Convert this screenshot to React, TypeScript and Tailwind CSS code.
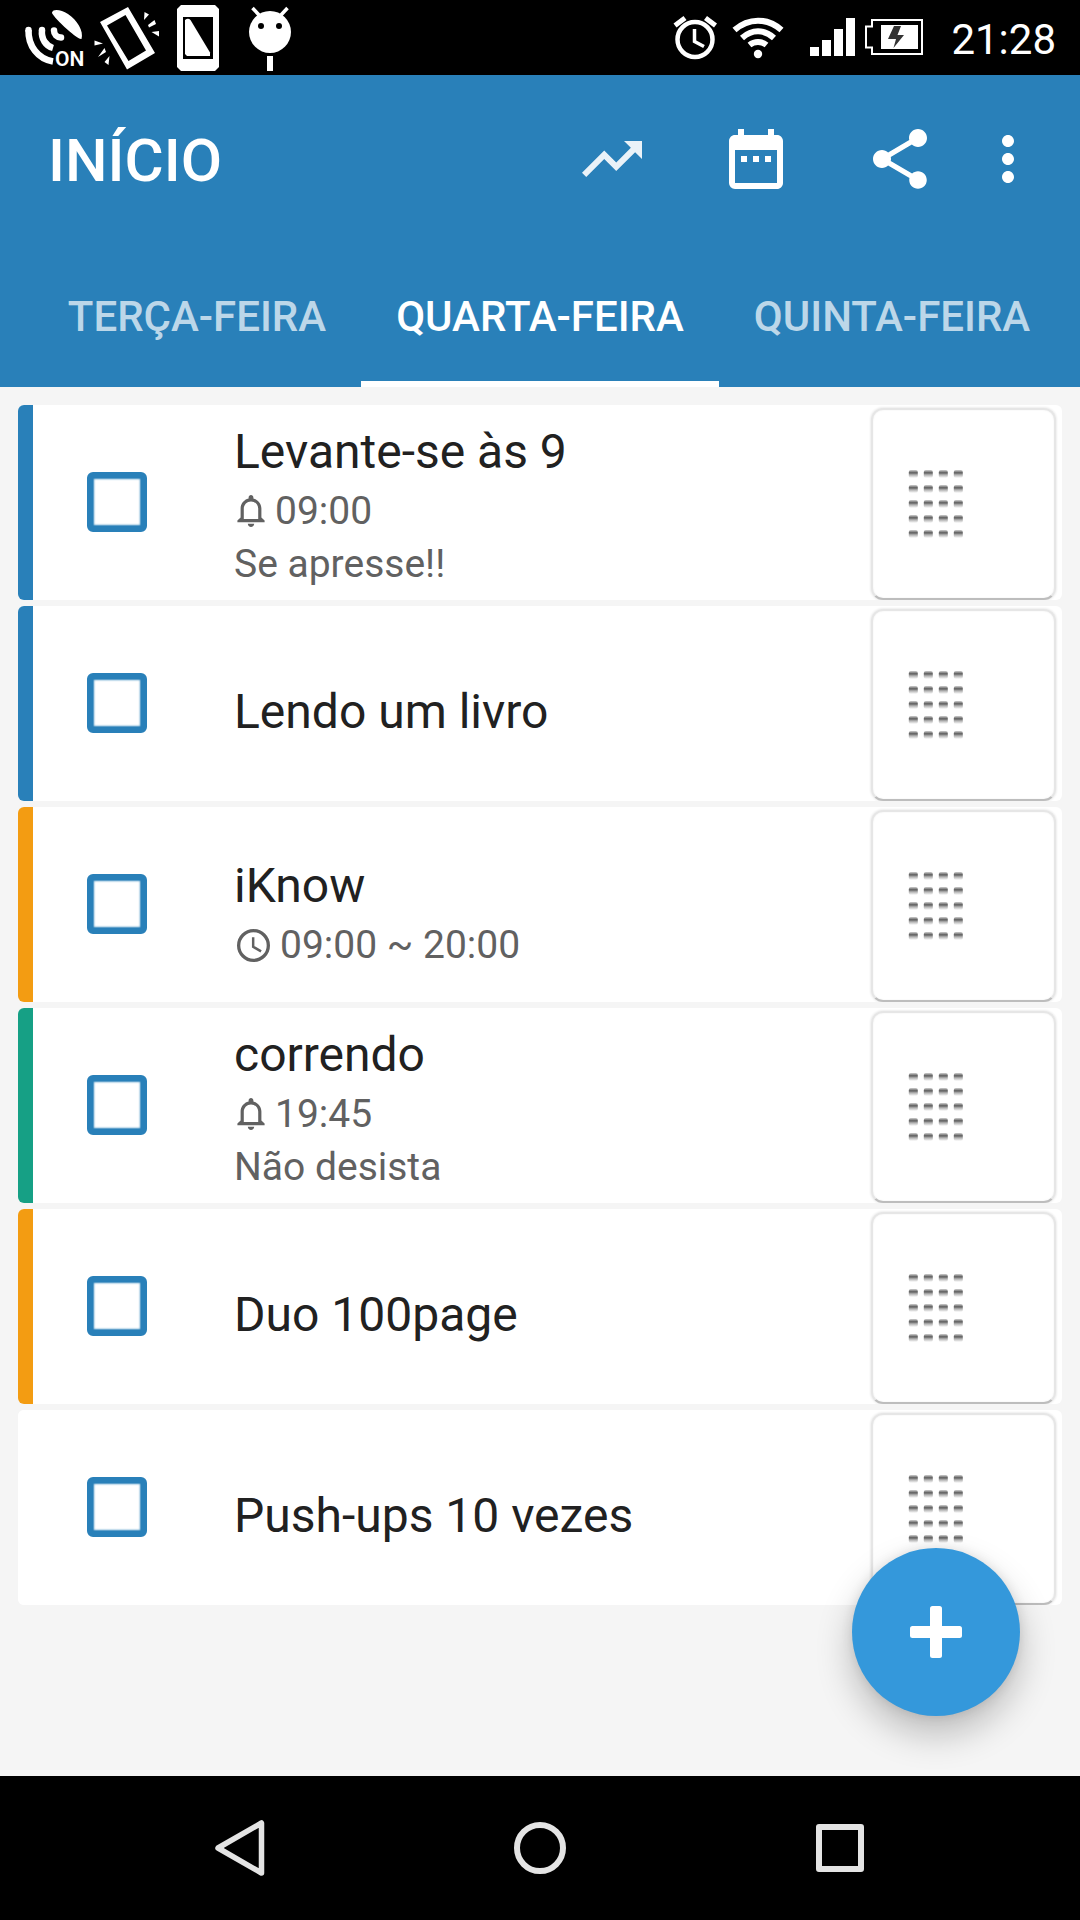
import { useState } from "react";
import { MdDateRange, MdMoreVert, MdShare, MdTrendingUp } from "react-icons/md";

type Task = {
  id: string;
  title: string;
  stripe: string;
  alarm?: string;
  period?: string;
  note?: string;
};

const tasks: Task[] = [
  { id: "levante", title: "Levante-se às 9", stripe: "bg-[#2980b9]", alarm: "09:00", note: "Se apresse!!" },
  { id: "livro", title: "Lendo um livro", stripe: "bg-[#2980b9]" },
  { id: "iknow", title: "iKnow", stripe: "bg-[#f39c12]", period: "09:00 ~ 20:00" },
  { id: "correndo", title: "correndo", stripe: "bg-[#16a085]", alarm: "19:45", note: "Não desista" },
  { id: "duo", title: "Duo 100page", stripe: "bg-[#f39c12]" },
  { id: "pushups", title: "Push-ups 10 vezes", stripe: "bg-white" },
];

const days = ["TERÇA-FEIRA", "QUARTA-FEIRA", "QUINTA-FEIRA"];

function StatusBar() {
  return (
    <div className="flex h-[75px] items-center justify-between bg-black pr-6 pl-[18px] text-white">
      <div className="flex">
        {/* GPS */}
        <svg className="h-[75px] w-[72px]" viewBox="18 0 72 75" fill="none" stroke="white">
          <path d="M52 12.5C53 8.5 61 9.500 68 14C77 20 84 31 81.500 39C77 40 51 15 52 12.500Z" fill="white" stroke="none" />
          <path d="M28.500 30C28 46 38 59 53 61.500" strokeWidth="6.500" />
          <circle cx="28.500" cy="30" r="3.200" fill="white" stroke="none" />
          <path d="M42 30C41 39 46 46 53 48" strokeWidth="6.500" />
          <circle cx="42" cy="30" r="3.200" fill="white" stroke="none" />
          <path d="M54 30.500C54 34.500 57 37.500 61 37.500" strokeWidth="6.500" strokeLinecap="round" />
          <text x="55" y="66" fill="white" stroke="none" fontSize="21" fontWeight="600" fontFamily="Roboto, sans-serif">
            ON
          </text>
        </svg>
        {/* vibrating phone */}
        <svg className="h-[75px] w-[72px]" viewBox="90 0 72 75" fill="white">
          <path
            fillRule="evenodd"
            d="M100 22L128 7L155 53L127 69.500ZM107 25.500L128.500 61L146 50.500L125.500 15Z"
          />
          <path d="M144.500 12L149 14.500L144 20ZM148 25L154.500 20L156 24L149 27.500ZM151.500 32L159 31V36.500ZM94.500 40.500V45.500L103 43.500ZM98 57L104.500 48L106 52ZM104.500 62L109.500 56L108.500 65Z" />
        </svg>
        {/* screen rotation */}
        <svg className="h-[75px] w-[72px]" viewBox="162 0 72 75" fill="white">
          <path
            fillRule="evenodd"
            d="M181 5H215L219 9V67L215 71H181L177 67V9ZM183 17V59H213V17Z"
          />
          <path d="M185 20Q188 17.500 190.500 20L210 52.500V56H187L185 54Z" />
        </svg>
        {/* android head on a stick */}
        <svg className="h-[75px] w-[72px]" viewBox="234 0 72 75">
          <circle cx="270" cy="32" r="21" fill="white" />
          <path d="M252.500 8L259 15M287.500 8L281 15" stroke="white" strokeWidth="3.500" />
          <rect x="267" y="56" width="6" height="15" fill="white" />
          <circle cx="261" cy="26" r="3" />
          <circle cx="279" cy="26" r="3" />
        </svg>
      </div>

      <div className="flex items-center">
        {/* alarm */}
        <svg className="h-[75px] w-[66px]" viewBox="660 0 66 75" fill="none" stroke="white">
          <circle cx="694" cy="39.500" r="17.500" strokeWidth="4.500" />
          <path d="M693.500 29V41.500L703 46.500" strokeWidth="3.500" />
          <path d="M674 25.500L684 18M704.500 18L714.500 25.500" strokeWidth="5" />
        </svg>
        {/* wifi */}
        <svg className="h-[75px] w-[66px]" viewBox="726 0 66 75" fill="none" stroke="white" strokeWidth="6">
          <path d="M733.500 30C747.500 17.500 766.500 17.500 780.500 30" />
          <path d="M741 38C751 29 763 29 773 38" />
          <path d="M748.500 45C753.500 41 760.500 41 765.500 45" />
          <circle cx="757" cy="54" r="4.200" fill="white" stroke="none" />
        </svg>
        {/* signal */}
        <svg className="h-[75px] w-[66px]" viewBox="792 0 66 75" fill="white">
          <path d="M809 47H818V56H809ZM821 40H830V56H821ZM833 29H842V56H833ZM845 18H854V56H845Z" />
        </svg>
        {/* charging battery */}
        <svg className="h-[75px] w-[66px]" viewBox="858 0 66 75">
          <path d="M871 20H921V54H871V47.500H865V26.500H871Z" fill="none" stroke="white" strokeWidth="2" />
          <rect x="880" y="25" width="37" height="24" fill="white" />
          <path d="M893 26H900L896.500 35H903L892.500 48L895 39H887Z" fill="#333333" />
        </svg>
        <span className="ml-[26px] pt-1 text-[42px] leading-none">21:28</span>
      </div>
    </div>
  );
}

function BellIcon() {
  return (
    <svg className="h-8 w-7" viewBox="3 2 17 20" fill="currentColor">
      <path d="M11.500 22c1.100 0 2-.9 2-2h-4c0 1.100.9 2 2 2zm6.500-6v-5.500c0-3.070-2.130-5.640-5-6.320V3.500c0-.83-.67-1.500-1.500-1.500S10 2.670 10 3.500v.68c-2.870.68-5 3.250-5 6.320V16l-2 2v1h17v-1l-2-2zm-2 1H7v-6.500C7 8.010 9.010 6 11.500 6S16 8.010 16 10.500V17z" />
    </svg>
  );
}

function ClockIcon() {
  return (
    <svg className="mt-0.5 h-[33px] w-[33px]" viewBox="2 2 20 20" fill="none" stroke="currentColor">
      <circle cx="12" cy="12" r="9" strokeWidth="2" />
      <path d="M11.800 7V12.800L16.600 15.600" strokeWidth="1.500" />
    </svg>
  );
}

function HandleIcon() {
  return (
    <svg className="h-[69px] w-[56px]" viewBox="0 0 56 69">
      <defs>
        <linearGradient id="dash" x1="0" y1="0" x2="0" y2="1">
          <stop offset="0" stopColor="#d0d0d0" />
          <stop offset="0.350" stopColor="#5c5c5c" />
          <stop offset="0.600" stopColor="#b0b0b0" />
          <stop offset="1" stopColor="#ffffff" />
        </linearGradient>
      </defs>
      {[0, 15, 30, 45, 60].map((y) =>
        [0, 15, 30, 45].map((x) => (
          <rect key={`${x}-${y}`} x={x + 0.8} y={y} width="9" height="8" rx="2" fill="url(#dash)" />
        ))
      )}
    </svg>
  );
}

function TaskCard({ task }: { task: Task }) {
  const [done, setDone] = useState(false);

  return (
    <li className="flex min-h-[195px] overflow-hidden rounded-md bg-white">
      <div className={`w-[15px] shrink-0 ${task.stripe}`} />
      <div className="flex flex-1 items-center">
        <input
          id={task.id}
          type="checkbox"
          checked={done}
          onChange={() => setDone(!done)}
          className="mb-0.5 ml-[54px] h-[60px] w-[60px] shrink-0 appearance-none rounded-md border-[6px] border-[#2980b9] bg-white shadow-[inset_0_0_2px_1px_#2980b9] checked:bg-[#2980b9]"
        />
        <div className="ml-[87px] pt-4">
          <label htmlFor={task.id} className="block text-[48px] leading-[56px] text-[#212121]">
            {task.title}
          </label>
          {(task.alarm || task.period) && (
            <p className="ml-[3px] flex items-center gap-[10px] pt-2 text-[39px] leading-[46px]">
              {task.alarm ? <BellIcon /> : <ClockIcon />}
              {task.alarm || task.period}
            </p>
          )}
          {task.note && <p className="pt-[7px] pb-[11px] text-[39px] leading-[46px]">{task.note}</p>}
        </div>
      </div>
      <button
        aria-label={`Mover ${task.title}`}
        className="mt-[3px] mr-[6px] flex w-[185px] shrink-0 items-start rounded-xl border-2 border-[#e6e6e6] border-b-[#bdbdbd] bg-white pt-[60px] pl-[35px] shadow-[0_0_2px_1px_#eeeeee,inset_0_0_2px_#eeeeee]"
      >
        <HandleIcon />
      </button>
    </li>
  );
}

export default function App() {
  const [day, setDay] = useState(1);

  return (
    <div className="flex min-h-screen flex-col bg-[#f5f5f5] font-['Roboto',sans-serif] text-[#616161]">
      <StatusBar />

      <header className="bg-[#2980b9] text-white">
        <div className="flex h-[168px] items-center pr-9 pl-12">
          <h1 className="flex-1 pt-1 text-[60px] leading-[70px] font-medium">INÍCIO</h1>
          <div className="flex items-center gap-[72px]">
            <button aria-label="Progresso">
              <MdTrendingUp size={72} className="opacity-90" />
            </button>
            <button aria-label="Calendário">
              <MdDateRange size={72} />
            </button>
            <div className="flex gap-9">
              <button aria-label="Compartilhar">
                <MdShare size={72} />
              </button>
              <button aria-label="Mais opções">
                <MdMoreVert size={72} />
              </button>
            </div>
          </div>
        </div>

        <nav className="grid h-36 grid-cols-[1fr_auto_1fr]">
          {days.map((name, i) => (
            <button
              key={name}
              onClick={() => setDay(i)}
              className={`border-b-[6px] px-[35px] pt-[10px] text-[42px] leading-[50px] font-medium whitespace-nowrap ${
                i === 0 ? "justify-self-end" : i === 2 ? "justify-self-start" : ""
              } ${day === i ? "border-white" : "border-transparent text-white/70"}`}
            >
              {name}
            </button>
          ))}
        </nav>
      </header>

      <main className="relative flex-1 p-[18px]">
        <ul className="flex flex-col gap-[6px]">
          {tasks.map((task) => (
            <TaskCard key={task.id} task={task} />
          ))}
        </ul>

        {/* Add button */}
        <button
          aria-label="Adicionar"
          className="absolute right-[60px] bottom-[60px] flex h-[168px] w-[168px] items-center justify-center rounded-full bg-[#3498db] shadow-[0_18px_36px_rgba(0,0,0,0.24),0_0_12px_rgba(0,0,0,0.1)]"
        >
          <svg className="h-[52px] w-[52px]" viewBox="0 0 52 52" fill="white">
            <rect x="0" y="20" width="52" height="12" rx="2.500" />
            <rect x="20" y="0" width="12" height="52" rx="2.500" />
          </svg>
        </button>
      </main>

      <footer className="grid h-36 grid-cols-3 bg-black px-[90px]">
        <button aria-label="Voltar" className="flex items-center justify-center">
          <svg className="h-[60px] w-[60px]" viewBox="0 0 60 60" fill="none" stroke="#e4e4e4" strokeWidth="5.500" strokeLinejoin="round">
            <path d="M51.500 5V55L8 30Z" />
          </svg>
        </button>
        <button aria-label="Início" className="flex items-center justify-center">
          <svg className="h-[60px] w-[60px]" viewBox="0 0 60 60" fill="none" stroke="#e4e4e4" strokeWidth="6">
            <circle cx="30" cy="30" r="23" />
          </svg>
        </button>
        <button aria-label="Recentes" className="flex items-center justify-center">
          <svg className="h-[60px] w-[60px]" viewBox="0 0 60 60" fill="none" stroke="#e4e4e4" strokeWidth="6" strokeLinejoin="round">
            <rect x="9" y="9" width="42" height="42" />
          </svg>
        </button>
      </footer>
    </div>
  );
}
